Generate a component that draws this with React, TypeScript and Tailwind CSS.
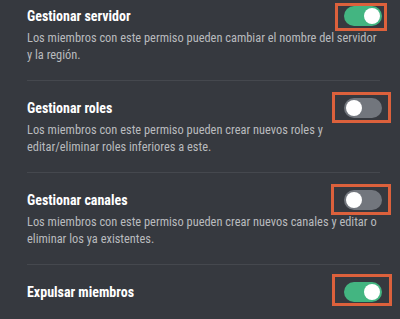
import React from "react";

type Perm = {
  title: string;
  lines: string[];
  on: boolean;
  box: string;
};

const perms: Perm[] = [
  {
    title: "Gestionar servidor",
    lines: [
      "Los miembros con este permiso pueden cambiar el nombre del servidor",
      "y la región.",
    ],
    on: true,
    box: "-left-[9px] -right-[5px] -top-[3px] -bottom-[5px]",
  },
  {
    title: "Gestionar roles",
    lines: [
      "Los miembros con este permiso pueden crear nuevos roles y",
      "editar/eliminar roles inferiores a este.",
    ],
    on: false,
    box: "-left-[12px] -right-[9px] -top-[6px] -bottom-[5px]",
  },
  {
    title: "Gestionar canales",
    lines: [
      "Los miembros con este permiso pueden crear nuevos canales y editar o",
      "eliminar los ya existentes.",
    ],
    on: false,
    box: "-left-[13px] -right-[9px] -top-[6px] -bottom-[5px]",
  },
  {
    title: "Expulsar miembros",
    lines: [],
    on: true,
    box: "-left-[12px] -right-[10px] -top-[8px] -bottom-[4px]",
  },
];

function Toggle({ on, box }: { on: boolean; box: string }) {
  return (
    <div className="relative">
      {/* hand-drawn highlight around the switch */}
      <div className={`absolute ${box} border-[3px] border-[#dc613c]`} />
      <div
        className={`flex h-[20px] w-[38px] items-center rounded-full p-[2px] ${
          on ? "justify-end bg-[#43b581]" : "justify-start bg-[#72767d]"
        }`}
      >
        <div className="h-[16px] w-[16px] rounded-full bg-white" />
      </div>
    </div>
  );
}

export default function App() {
  return (
    <div className="h-[319px] w-[400px] overflow-hidden bg-[#36393f] pt-[6px] pl-[27px] pr-[18px] font-['Roboto_Condensed',Lato,sans-serif]">
      {perms.map((p, i) => (
        <div key={p.title}>
          <div className="flex h-[20px] items-center justify-between">
            <div className="text-[14px] font-bold text-white">{p.title}</div>
            <Toggle on={p.on} box={p.box} />
          </div>
          {p.lines.length > 0 && (
            <div className="mt-[3px] text-[12.4px] leading-[17px] text-[#b9bbbe]">
              {p.lines.map((l) => (
                <div key={l} className="whitespace-nowrap">
                  {l}
                </div>
              ))}
            </div>
          )}
          {i < perms.length - 1 && (
            <div className="mt-[17px] mb-[17px] mr-[2px] h-px bg-[#45484e]" />
          )}
        </div>
      ))}
    </div>
  );
}
